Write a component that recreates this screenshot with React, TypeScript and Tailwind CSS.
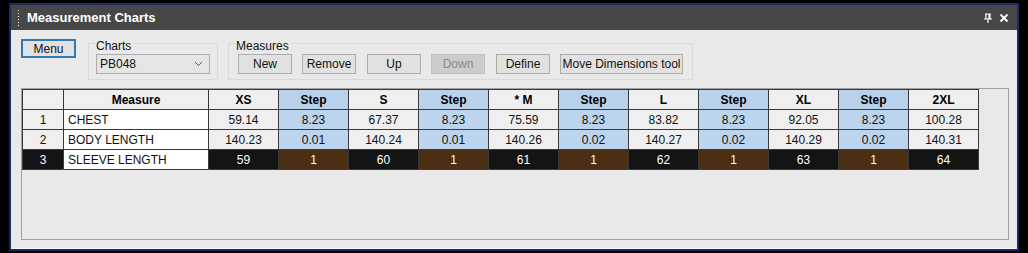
import React from "react";

const sizes = ["XS", "S", "* M", "L", "XL", "2XL"];
const rows = [
  { n: "1", name: "CHEST", vals: ["59.14", "67.37", "75.59", "83.82", "92.05", "100.28"], steps: ["8.23", "8.23", "8.23", "8.23", "8.23"], sel: false },
  { n: "2", name: "BODY LENGTH", vals: ["140.23", "140.24", "140.26", "140.27", "140.29", "140.31"], steps: ["0.01", "0.01", "0.02", "0.02", "0.02"], sel: false },
  { n: "3", name: "SLEEVE LENGTH", vals: ["59", "60", "61", "62", "63", "64"], steps: ["1", "1", "1", "1", "1"], sel: true },
];

function Btn({ label, w, disabled }: { label: string; w: string; disabled?: boolean }) {
  return (
    <div
      className={`${w} h-[20px] flex items-center justify-center border text-[12px] ${
        disabled ? "bg-[#cccccc] border-[#bfbfbf] text-[#8a8a8a]" : "bg-[#e1e1e1] border-[#adadad] text-[#111]"
      }`}
    >
      {label}
    </div>
  );
}

export default function App() {
  const cols: { label: string; step: boolean }[] = [];
  sizes.forEach((s, i) => {
    cols.push({ label: s, step: false });
    if (i < sizes.length - 1) cols.push({ label: "Step", step: true });
  });

  return (
    <div className="w-[1028px] h-[253px] bg-black pt-[3px] pl-[9px] pr-[9px] overflow-hidden" style={{ fontFamily: '"Liberation Sans", Arial, sans-serif' }}>
      <div className="w-[1010px] h-[248px] border-2 border-[#1c2b5e] bg-[#e9e9e9] flex flex-col">
        {/* title bar */}
        <div className="h-[25px] bg-[#474747] flex items-center pl-[7px] pr-[8px]">
          <div className="flex flex-col gap-[2px] h-[18px] justify-center">
            {[0, 1, 2, 3, 4, 5].map((i) => (
              <div key={i} className="w-[1px] h-[1px] bg-white" />
            ))}
          </div>
          <div className="ml-[8px] text-white font-bold text-[13px] leading-none">Measurement Charts</div>
          <div className="ml-auto flex items-center gap-[6px]">
            <svg width="10" height="10" viewBox="0 0 10 10">
              <path d="M2 1h6M3 1v5M7 1v5M6 1v5M1 6h8M5 6v4" stroke="white" strokeWidth="1.2" fill="none" />
            </svg>
            <svg width="10" height="10" viewBox="0 0 10 10">
              <path d="M1.5 1.5l7 7M8.5 1.5l-7 7" stroke="white" strokeWidth="1.8" fill="none" />
            </svg>
          </div>
        </div>
        {/* body */}
        <div className="flex-1 flex flex-col pl-[10px] pr-[9px] border-b border-[#f7f7f7]">
          {/* toolbar */}
          <div className="flex items-start h-[58px]">
            <div className="mt-[9px] w-[55px] h-[19px] border-2 border-[#2f79b5] bg-[#e1e1e1] flex items-center justify-center text-[12px] text-[#111]">
              Menu
            </div>
            <div className="relative ml-[12px] mt-[13px] w-[130px] h-[37px] border border-[#dadada]">
              <div className="absolute -top-[4px] left-[7px] text-[12px] leading-none text-[#111] bg-[#e9e9e9] pr-[2px]">Charts</div>
              <div className="absolute left-[7px] top-[10px] w-[114px] h-[20px] border border-[#adadad] bg-[#e5e5e5] flex items-center pl-[3px] pr-[6px] text-[12px] text-[#111]">
                PB048
                <svg className="ml-auto" width="9" height="6" viewBox="0 0 9 6">
                  <path d="M1 1l3.5 3.5L8 1" stroke="#555" strokeWidth="1" fill="none" />
                </svg>
              </div>
            </div>
            <div className="relative ml-[10px] mt-[13px] w-[465px] h-[37px] border border-[#dadada] flex items-start pl-[9px] pt-[10px]">
              <div className="absolute -top-[4px] left-[7px] text-[12px] leading-none text-[#111] bg-[#e9e9e9] pr-[2px]">Measures</div>
              <div className="flex gap-[10px]">
                <Btn label="New" w="w-[54px]" />
                <Btn label="Remove" w="w-[54px]" />
                <div className="ml-[1px]"><Btn label="Up" w="w-[54px]" /></div>
                <Btn label="Down" w="w-[54px]" disabled />
                <div className="ml-[1px]"><Btn label="Define" w="w-[54px]" /></div>
                <Btn label="Move Dimensions tool" w="w-[123px]" />
              </div>
            </div>
          </div>
          {/* data panel */}
          <div className="w-[988px] h-[152px] border border-[#a0a0a0] bg-[#e9e9e9]">
            <div className="w-[957px] border-t border-l border-[#3a3a3a] text-[12px]">
              {/* header */}
              <div className="flex h-[20px]">
                <div className="w-[41px] bg-[#efefef] border-r border-b border-[#3a3a3a]" />
                <div className="w-[145px] bg-[#efefef] border-r border-b border-[#3a3a3a] flex items-center justify-center font-bold text-black">Measure</div>
                {cols.map((c, i) => (
                  <div
                    key={i}
                    className={`w-[70px] border-r border-b border-[#3a3a3a] flex items-center justify-center font-bold text-black ${c.step ? "bg-[#b9d1ea]" : "bg-[#efefef]"}`}
                  >
                    {c.label}
                  </div>
                ))}
              </div>
              {rows.map((r) => (
                <div key={r.n} className="flex h-[20px]">
                  <div className={`w-[41px] border-r border-b border-[#3a3a3a] flex items-center justify-center ${r.sel ? "bg-[#141414] text-white" : "bg-[#efefef] text-[#111]"}`}>{r.n}</div>
                  <div className="w-[145px] bg-white border-r border-b border-[#3a3a3a] flex items-center pl-[4px] text-[#111]">{r.name}</div>
                  {cols.map((c, i) => {
                    const v = c.step ? r.steps[(i - 1) / 2] : r.vals[i / 2];
                    const cls = r.sel
                      ? c.step
                        ? "bg-[#4a2f15] text-white"
                        : "bg-[#141414] text-white"
                      : c.step
                      ? "bg-[#bcd4ee] text-[#111]"
                      : "bg-[#efefef] text-[#111]";
                    return (
                      <div key={i} className={`w-[70px] border-r border-b border-[#3a3a3a] flex items-center justify-center ${cls}`}>
                        {v}
                      </div>
                    );
                  })}
                </div>
              ))}
            </div>
          </div>
        </div>
      </div>
    </div>
  );
}
